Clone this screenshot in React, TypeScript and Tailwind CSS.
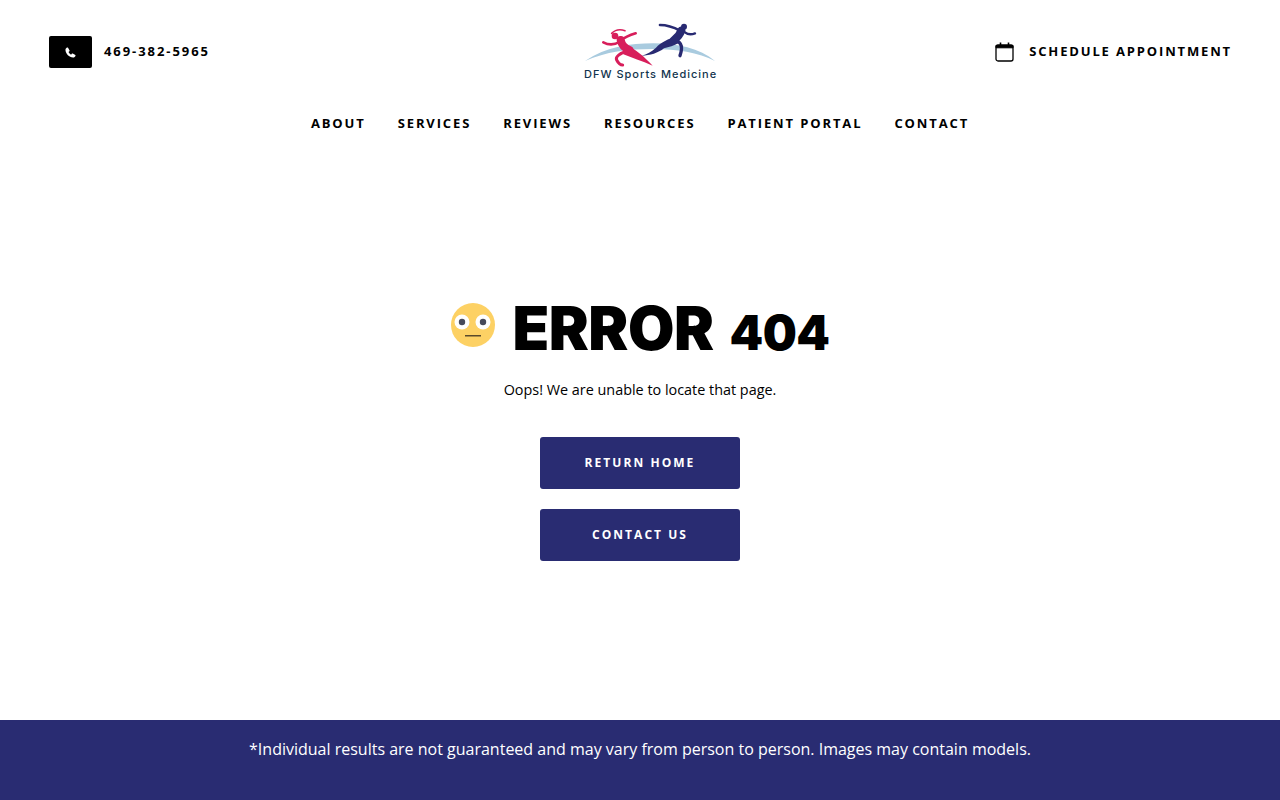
import React from "react";

const navItems = ["ABOUT", "SERVICES", "REVIEWS", "RESOURCES", "PATIENT PORTAL", "CONTACT"];

const Logo = () => (
  <div className="relative h-[60px] w-[134px]">
    <svg className="absolute left-[-14px] top-[-7px]" width="160" height="75" viewBox="0 0 480 225" fill="none">
      {/* arc */}
      <path d="M45 138 C110 95 180 85 250 85 C320 85 390 100 435 138 C385 112 320 102 250 102 C170 102 110 110 45 138Z" fill="#a9cbdf" />
      {/* pink runner */}
      <g stroke="#d81e5b" strokeLinecap="round" fill="none">
        <path d="M125 55 C135 45 150 42 165 47" strokeWidth="5" />
        <path d="M100 82 C115 90 130 92 150 80" strokeWidth="8" />
        <path d="M150 78 C165 66 180 60 197 55" strokeWidth="8" />
        <path d="M152 75 C155 90 165 100 178 105" strokeWidth="24" />
        <path d="M172 108 C150 115 135 125 140 135 C145 145 150 150 158 150" strokeWidth="9" />
      </g>
      <circle cx="135" cy="63" r="10" fill="#d81e5b" />
      <path d="M165 88 C195 100 225 128 248 152 C215 138 185 128 160 118Z" fill="#d81e5b" />
      {/* blue runner */}
      <g stroke="#282a72" strokeLinecap="round" fill="none">
        <path d="M270 30 C290 30 310 36 330 47" strokeWidth="8" />
        <path d="M345 52 C355 60 365 59 375 55" strokeWidth="7" />
        <path d="M334 47 C330 58 322 68 312 75" strokeWidth="24" />
        <path d="M310 75 C328 78 342 88 330 122" strokeWidth="10" />
      </g>
      <circle cx="342" cy="35" r="9" fill="#282a72" />
      <path d="M322 62 C295 72 272 82 258 98 C245 110 230 118 215 122 C240 122 265 114 282 100 C297 96 312 92 326 84Z" fill="#282a72" />
    </svg>
    <div className="absolute left-0 top-[44px] whitespace-nowrap font-['Inter',sans-serif] text-[11px] font-medium leading-[16px] tracking-[1px] text-[#12344d]">
      DFW Sports Medicine
    </div>
  </div>
);

const Face = () => (
  <svg width="46" height="46" viewBox="0 0 46 46">
    <circle cx="23" cy="23" r="22" fill="#fdd164" />
    <circle cx="12" cy="20" r="7.5" fill="#fff" />
    <circle cx="33" cy="20" r="7.5" fill="#fff" />
    <circle cx="12" cy="20" r="3.2" fill="#474a5a" />
    <circle cx="33" cy="20" r="3.2" fill="#474a5a" />
    <rect x="15" y="33" width="16" height="1.5" fill="#5a4a2a" />
  </svg>
);

export default function App() {
  return (
    <div className="flex h-screen flex-col bg-white font-['Open_Sans',sans-serif] text-black">
      <header className="flex flex-col">
        <div className="flex h-[103px] items-start pl-[49px] pr-[48px] pt-[22px]">
          <div className="flex h-[60px] w-[535px] items-center gap-3">
            <div className="flex h-[32px] w-[43px] items-center justify-center rounded-[2px] bg-black">
              <svg width="11" height="11" viewBox="0 0 24 24" fill="#fff">
                <path d="M6.6 1.5 L10 7.5 C10.3 8.2 10.2 8.9 9.6 9.4 L7.6 11 C8.8 13.5 10.7 15.5 13.2 16.7 L14.9 14.6 C15.4 14.1 16.1 14 16.8 14.3 L22.6 17.6 C23 18 23 18.5 22.9 19 C22.2 21.5 20.2 23 17.6 23 C9 22.5 1.6 15.2 1 6.5 C1 3.9 2.7 2 5.2 1.2 C5.8 1.1 6.3 1.2 6.6 1.5Z" />
              </svg>
            </div>
            <span className="text-[13px] font-bold tracking-[1.93px]">469-382-5965</span>
          </div>
          <Logo />
          <div className="flex h-[60px] flex-1 items-center justify-end gap-[15px]">
            <svg width="19" height="20" viewBox="0 0 19 20" fill="none" stroke="#000">
              <rect x="1" y="3" width="17" height="16" rx="2" strokeWidth="1.3" />
              <path d="M1 3.5 H18 V5.8 H1Z" fill="#000" strokeWidth="1" />
              <path d="M5.5 0.5 V3 M13.5 0.5 V3" strokeWidth="1.6" />
            </svg>
            <span className="text-[13px] font-bold tracking-[1.85px]">SCHEDULE APPOINTMENT</span>
          </div>
        </div>
        <nav className="flex h-[42px] items-center justify-center gap-[32px]">
          {navItems.map((item) => (
            <a key={item} className="text-[13px] font-bold tracking-[1.88px]">
              {item}
            </a>
          ))}
        </nav>
      </header>

      <main className="flex flex-1 flex-col items-center pt-[157px]">
        <div className="flex h-[46px] items-center">
          <Face />
          <h1 className="ml-4 mt-[6px] flex items-baseline whitespace-nowrap font-['Inter',sans-serif] font-black leading-none tracking-[-0.5px]">
            <span className="text-[60px]">ERROR</span>
            <span className="ml-4 text-[48px]">404</span>
          </h1>
        </div>
        <p className="mt-[30px] text-[14.4px] leading-[24px]">Oops! We are unable to locate that page.</p>
        <a className="mt-[35px] flex h-[52px] w-[200px] items-center justify-center rounded-[3px] bg-[#292c72] text-[12px] font-bold tracking-[2.05px] text-white">
          RETURN HOME
        </a>
        <a className="mt-5 flex h-[52px] w-[200px] items-center justify-center rounded-[3px] bg-[#292c72] text-[12px] font-bold tracking-[2.05px] text-white">
          CONTACT US
        </a>
      </main>

      <footer className="h-[80px] bg-[#292c72] pt-[17px] text-center text-[16px] font-normal leading-[24px] text-white">
        *Individual results are not guaranteed and may vary from person to person. Images may contain models.
      </footer>
    </div>
  );
}
